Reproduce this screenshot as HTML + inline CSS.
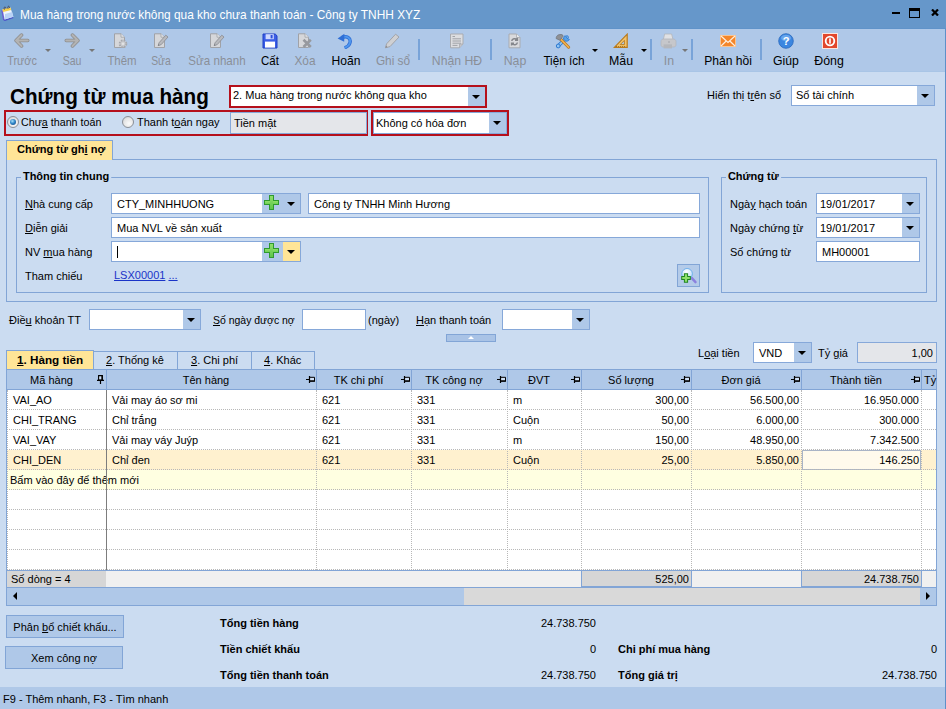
<!DOCTYPE html>
<html><head><meta charset="utf-8">
<style>
*{box-sizing:border-box;margin:0;padding:0}
html,body{width:946px;height:709px;overflow:hidden}
body{background:#cbdcf1;font-family:"Liberation Sans",sans-serif;font-size:12px;color:#000;position:relative}
.a{position:absolute;white-space:nowrap}
#title{left:0;top:0;width:946px;height:28px;background:#6697ca}
#title .t{left:20px;top:8px;color:#fff;font-size:11.9px;transform:scaleX(1.0);transform-origin:0 0}
#tb{left:0;top:28px;width:946px;height:44px;background:#afc8e8}
.tl{font-size:13px;text-align:center;transform:translateX(-50%) scaleX(.86);top:53px;color:#000}
.tl.d{color:#8a8f98}
.sep{width:2px;height:21px;top:39px;background:#78a3d8}
.arr{width:0;height:0;border-left:3px solid transparent;border-right:3px solid transparent;border-top:3px solid #000}
.arr.d{border-top-color:#777}
#status{left:0;top:687px;width:946px;height:22px;background:#afc8e8}
#rb{left:945px;top:28px;width:1px;height:681px;background:#5f90c8;z-index:5}
h1{font-size:22px;font-weight:bold;left:10px;top:84px;transform:scaleX(.94);transform-origin:0 0}
.inp{background:#fff;border:1px solid #86a8d9;height:21px;line-height:21px;padding-left:5px;font-size:12px}
.inp.g{background:#e4e6ea}
.dd{position:absolute;right:0;top:0;width:17px;height:19px;background:#afc8e8}
.dd:after{content:"";position:absolute;left:4px;top:8px;border-left:4px solid transparent;border-right:4px solid transparent;border-top:4px solid #000}
.red{border:2px solid #b5101c}
.lbl{font-size:12px}
u{text-decoration:underline}
.gb{border:1px solid #82a5d6}
.gbt{font-weight:bold;font-size:11.6px;background:#cbdcf1;padding:0 2px;transform:scaleX(.95);transform-origin:0 0}
.b{font-weight:bold}
.rad{width:12px;height:12px;border-radius:50%;border:1px solid #8a8f97;background:radial-gradient(circle at 60% 65%,#fbfbfb 0,#e6e6e6 55%,#c9cacc 100%)}
.rad i{position:absolute;left:2px;top:2px;width:6px;height:6px;border-radius:50%;background:radial-gradient(circle at 40% 35%,#a9e2fb 0,#2f86c8 45%,#123f7c 100%)}
.f{font-size:11px}
.pl{position:absolute;top:0;width:21px;height:19px;background:#afc8e8}
.pl:before{content:"";position:absolute;left:2px;top:1px;width:15px;height:15px;background:
 linear-gradient(#2f9a2f,#2f9a2f) 5px 0/5px 15px no-repeat,linear-gradient(#2f9a2f,#2f9a2f) 0 5px/15px 5px no-repeat}
.pl:after{content:"";position:absolute;left:3px;top:2px;width:13px;height:13px;background:
 linear-gradient(#8fe06a,#5fc54a) 5px 0/3px 13px no-repeat,linear-gradient(#8fe06a,#6fcf55) 0 5px/13px 3px no-repeat}
.btn{background:#afc8e8;border:1px solid #82a5d6;text-align:center;line-height:20px}
</style></head><body>
<div class="a" id="title"><div class="a t">Mua hàng trong nước không qua kho chưa thanh toán - Công ty TNHH XYZ</div></div>
<div class="a" id="tb"></div>
<div class="a" id="rb"></div>
<div class="a" style="left:0;top:28px;width:946px;height:1px;background:#6093c9"></div>
<div class="a" style="left:0;top:71px;width:946px;height:1px;background:#a9c5e6"></div>
<!-- toolbar icons -->
<svg class="a" style="left:13.5px;top:32.5px" width="16" height="15" viewBox="0 0 17 16"><path d="M8 2.2 L2.2 8 L8 13.8 M2.6 8 H14.6" fill="none" stroke="#8c8c8c" stroke-width="3.8" stroke-linejoin="round" stroke-linecap="round"/><path d="M8 2.2 L2.2 8 L8 13.8 M2.6 8 H14.6" fill="none" stroke="#b3b3b3" stroke-width="2.2" stroke-linejoin="round" stroke-linecap="round"/></svg>
<svg class="a" style="left:63.5px;top:32.5px" width="16" height="15" viewBox="0 0 17 16"><path d="M9 2.2 L14.8 8 L9 13.8 M14.4 8 H2.4" fill="none" stroke="#8c8c8c" stroke-width="3.8" stroke-linejoin="round" stroke-linecap="round"/><path d="M9 2.2 L14.8 8 L9 13.8 M14.4 8 H2.4" fill="none" stroke="#b3b3b3" stroke-width="2.2" stroke-linejoin="round" stroke-linecap="round"/></svg>
<svg class="a" style="left:113px;top:33px" width="16" height="16" viewBox="0 0 16 16"><path d="M1.5 0.8 H8 L11.5 4.2 V14.5 H1.5 Z" fill="#d6d7da" stroke="#a0a2a7" stroke-width="1"/><path d="M8 0.8 V4.2 H11.5" fill="#e6e7e9" stroke="#a0a2a7" stroke-width=".8"/><circle cx="10" cy="10.8" r="3.4" fill="#c9cacd" stroke="#a6a8ad" stroke-width="1.8" stroke-dasharray="1.6 1.1"/><circle cx="10" cy="10.8" r="1.3" fill="#e2e3e5"/></svg>
<svg class="a" style="left:153px;top:33px" width="16" height="16" viewBox="0 0 16 16"><path d="M1.5 0.8 H8 L11.5 4.2 V14.5 H1.5 Z" fill="#d6d7da" stroke="#a0a2a7" stroke-width="1"/><path d="M8 0.8 V4.2 H11.5" fill="#e6e7e9" stroke="#a0a2a7" stroke-width=".8"/><path d="M5.2 12.6 L6 9.8 L12.8 2.2 L15 4 L8.2 11.6 Z" fill="#b9babe" stroke="#8f9196" stroke-width=".9"/><path d="M5.2 12.6 L6.4 12.2 L5.7 11.4Z" fill="#55575c"/></svg>
<svg class="a" style="left:209px;top:33px" width="16" height="16" viewBox="0 0 16 16"><path d="M1.5 0.8 H8 L11.5 4.2 V14.5 H1.5 Z" fill="#d6d7da" stroke="#a0a2a7" stroke-width="1"/><path d="M8 0.8 V4.2 H11.5" fill="#e6e7e9" stroke="#a0a2a7" stroke-width=".8"/><path d="M5.2 12.6 L6 9.8 L12.8 2.2 L15 4 L8.2 11.6 Z" fill="#b9babe" stroke="#8f9196" stroke-width=".9"/><path d="M5.2 12.6 L6.4 12.2 L5.7 11.4Z" fill="#55575c"/></svg>
<svg class="a" style="left:262px;top:33px" width="16" height="16" viewBox="0 0 16 16"><path d="M1 1 H13.2 L15 2.8 V15 H1 Z" fill="#3b5ee6" stroke="#1f3fc4" stroke-width="1"/><rect x="3.6" y="1.2" width="8.2" height="5" fill="#cfd9ff"/><rect x="8.6" y="2" width="2" height="3.4" fill="#2b4fd8"/><rect x="3" y="8.6" width="10" height="6" fill="#fff"/></svg>
<svg class="a" style="left:297px;top:33px" width="16" height="16" viewBox="0 0 16 16"><path d="M1.5 0.8 H8 L11.5 4.2 V14.5 H1.5 Z" fill="#d6d7da" stroke="#a0a2a7" stroke-width="1"/><path d="M8 0.8 V4.2 H11.5" fill="#e6e7e9" stroke="#a0a2a7" stroke-width=".8"/><path d="M6.5 6.8 L13.8 14 M13.8 6.8 L6.5 14" stroke="#97999e" stroke-width="2.6"/></svg>
<svg class="a" style="left:337px;top:33px" width="16" height="16" viewBox="0 0 16 16"><path d="M5 4.6 C9.5 2.2 14.2 5 13 9.6 C12.4 12 10.4 13.8 7.6 14.8" fill="none" stroke="#2f6fd6" stroke-width="3.4"/><path d="M5 4.6 C9.5 2.2 14.2 5 13 9.6 C12.4 12 10.4 13.8 7.6 14.8" fill="none" stroke="#4f97ee" stroke-width="1.8"/><path d="M0.6 5.4 L7.4 0.8 L7.2 8.8 Z" fill="#2f6fd6"/></svg>
<svg class="a" style="left:384px;top:33px" width="16" height="16" viewBox="0 0 16 16"><path d="M1.4 14.8 L2.6 10.8 L11.6 1.2 L15 4 L6 13.6 Z" fill="#cfd0d3" stroke="#a2a4a9" stroke-width="1"/><path d="M1.4 14.8 L3.6 14.2 L2.2 12.6 Z" fill="#8a8c91"/></svg>
<svg class="a" style="left:449px;top:33px" width="16" height="16" viewBox="0 0 16 16"><path d="M1.5 1 H14 V11 L10.5 14.8 H1.5 Z" fill="#dcdde0" stroke="#a9abb0"/><path d="M10.5 14.8 V11 H14" fill="#c4c5c9" stroke="#a9abb0" stroke-width=".8"/><path d="M3.5 3.5 H6 M3.5 5.8 H12 M3.5 8 H12 M3.5 10.2 H12 M3.5 12.4 H8.5" stroke="#a0a2a7" stroke-width="1"/></svg>
<svg class="a" style="left:507px;top:33px" width="16" height="16" viewBox="0 0 16 16"><path d="M2 1 H9.5 L13 4.5 V14.8 H2 Z" fill="#d9dadd" stroke="#a9abb0"/><path d="M9.5 1 V4.5 H13" fill="#ebecee" stroke="#a9abb0" stroke-width=".8"/><path d="M4.8 8 C5 5.6 8.5 5 10 6.8 M10.4 4.8 V7.2 H8 M10.4 9.5 C10 12 6.6 12.4 5 10.6 M4.6 12.6 V10.2 H7" fill="none" stroke="#85878c" stroke-width="1.5"/></svg>
<svg class="a" style="left:555px;top:33px" width="16" height="16" viewBox="0 0 16 16"><path d="M3.4 12.8 L12 4.2" stroke="#2f7ad0" stroke-width="3.6" stroke-linecap="round"/><path d="M3.4 12.8 L12 4.2" stroke="#8ec4f4" stroke-width="1.8" stroke-linecap="round"/><path d="M10.2 2.6 A3 3 0 1 0 14.4 6.4 L12.4 5.6 L11.2 4 Z" fill="#5aa2e6" stroke="#2f7ad0" stroke-width=".8"/><circle cx="3.2" cy="13" r="1.9" fill="#8ec4f4" stroke="#2f7ad0" stroke-width="1"/><path d="M6 6.5 L13.6 14.2" stroke="#b9771e" stroke-width="3" stroke-linecap="round"/><path d="M6 6.5 L13.6 14.2" stroke="#f2b252" stroke-width="1.6" stroke-linecap="round"/><path d="M1.2 5.6 C1 2.6 3.6 0.8 7.4 1.8 L8.2 3.2 L4.8 7.2 Z" fill="#8f9196" stroke="#6c6e73" stroke-width=".7"/></svg>
<svg class="a" style="left:613px;top:33px" width="16" height="16" viewBox="0 0 16 16"><path d="M14.2 1.2 V14.4 H1.4 Z" fill="#f3c36a" stroke="#b97a1c" stroke-width="1.2"/><path d="M11.4 7.4 V11.6 H7.2 Z" fill="#afc8e8" stroke="#b97a1c" stroke-width=".9"/><path d="M3.5 13 V14 M5.5 13 V14 M7.5 13 V14 M9.5 13 V14 M11.5 13 V14" stroke="#8a5a12" stroke-width=".7"/></svg>
<svg class="a" style="left:660px;top:33px" width="17" height="17" viewBox="0 0 17 17"><path d="M4.6 1 H11.6 L13 6.4 H3.4 Z" fill="#e0e1e4" stroke="#b4b6bb" stroke-width=".8"/><path d="M1 8.6 C1 6.8 2.2 6 3.8 6 H12.8 C14.8 6 16 6.8 16 8.6 V12 C16 13.4 14.8 14 13.6 14 H3.4 C2.2 14 1 13.4 1 12 Z" fill="#c6c7cb" stroke="#b0b2b7" stroke-width=".6"/><rect x="3.6" y="11.4" width="8.4" height="4" fill="#b5b7bc"/><circle cx="9" cy="9" r=".8" fill="#a0a2a7"/></svg>
<svg class="a" style="left:720px;top:33px" width="16" height="16" viewBox="0 0 16 16"><rect x=".5" y="2.5" width="15" height="11" fill="#f4862a" stroke="#f7c391"/><path d="M1 3 L8 9.4 L15 3 M1 13 L6.2 8 M15 13 L9.8 8" fill="none" stroke="#fdeede" stroke-width="1.2"/></svg>
<svg class="a" style="left:778px;top:33px" width="16" height="16" viewBox="0 0 16 16"><circle cx="8" cy="8" r="7.3" fill="#3b86e0" stroke="#2968bd" stroke-width=".8"/><ellipse cx="8" cy="5" rx="5" ry="3.2" fill="#79b2f2" opacity=".7"/><text x="8" y="12" font-family="Liberation Sans" font-weight="bold" font-size="11" fill="#fff" text-anchor="middle">?</text></svg>
<svg class="a" style="left:822px;top:33px" width="16" height="16" viewBox="0 0 16 16"><rect x=".5" y=".5" width="15" height="15" fill="#e2472c" stroke="#fbe4de"/><circle cx="8" cy="8" r="4.3" fill="none" stroke="#fff" stroke-width="1.8"/><rect x="7.2" y="5.4" width="1.6" height="5.2" fill="#fff"/></svg>
<!-- toolbar labels -->
<div class="a tl d" style="left:21.8px;transform:translateX(-50%) scaleX(0.835)">Trước</div>
<div class="a tl d" style="left:72.3px;transform:translateX(-50%) scaleX(0.81)">Sau</div>
<div class="a tl d" style="left:122px;transform:translateX(-50%) scaleX(0.88)">Thêm</div>
<div class="a tl d" style="left:161.3px;transform:translateX(-50%) scaleX(0.8)">Sửa</div>
<div class="a tl d" style="left:217px;transform:translateX(-50%) scaleX(0.89)">Sửa nhanh</div>
<div class="a tl" style="left:269.7px;transform:translateX(-50%) scaleX(0.88)">Cất</div>
<div class="a tl d" style="left:304.9px;transform:translateX(-50%) scaleX(0.91)">Xóa</div>
<div class="a tl" style="left:345.8px;transform:translateX(-50%) scaleX(0.93)">Hoãn</div>
<div class="a tl d" style="left:392.9px;transform:translateX(-50%) scaleX(0.91)">Ghi sổ</div>
<div class="a tl d" style="left:456.6px;transform:translateX(-50%) scaleX(0.94)">Nhận HĐ</div>
<div class="a tl d" style="left:515px;transform:translateX(-50%) scaleX(0.95)">Nạp</div>
<div class="a tl" style="left:563.5px;transform:translateX(-50%) scaleX(0.9)">Tiện ích</div>
<div class="a tl" style="left:621px;transform:translateX(-50%) scaleX(0.95)">Mẫu</div>
<div class="a tl d" style="left:668.6px;transform:translateX(-50%) scaleX(0.95)">In</div>
<div class="a tl" style="left:728.3px;transform:translateX(-50%) scaleX(0.93)">Phản hồi</div>
<div class="a tl" style="left:786.3px;transform:translateX(-50%) scaleX(0.94)">Giúp</div>
<div class="a tl" style="left:829.4px;transform:translateX(-50%) scaleX(0.95)">Đóng</div>
<div class="a sep" style="left:418px"></div>
<div class="a sep" style="left:490px"></div>
<div class="a sep" style="left:650px"></div>
<div class="a sep" style="left:691px"></div>
<div class="a sep" style="left:760px"></div>
<div class="a arr d" style="left:45px;top:49px"></div>
<div class="a arr d" style="left:89px;top:49px"></div>
<div class="a arr" style="left:592px;top:49px"></div>
<div class="a arr" style="left:641px;top:49px"></div>
<div class="a arr d" style="left:682px;top:49px"></div>
<!-- window controls -->
<div class="a" style="left:892px;top:12px;width:8px;height:2px;background:#000"></div>
<div class="a" style="left:909px;top:8px;width:11px;height:10px;border:1px solid #000;border-top-width:3px"></div>
<svg class="a" style="left:931px;top:9px" width="8" height="7" viewBox="0 0 8 7"><path d="M1 0.5 L7 6.5 M7 0.5 L1 6.5" stroke="#000" stroke-width="2.2"/></svg>
<!-- app icon -->
<svg class="a" style="left:0px;top:5px" width="15" height="17" viewBox="0 0 15 17"><path d="M1.2 5.2 L3 14.8 L5 16 L4 5 Z" fill="#6a5fd0"/><path d="M3 14.8 L5 16 L13.6 13 L12.4 11.6 Z" fill="#4a55c8"/><path d="M2.6 4.4 L10.4 2.6 L13.4 11.8 L4.6 14.6 Z" fill="#eef4ff"/><path d="M5 9 L12.2 7 L13.4 11.8 L4.6 14.6 Z" fill="#b9d2f6"/><path d="M2.4 4.2 L10.4 2.4 L11.2 5 L3 7 Z" fill="#f6cf4a"/><path d="M4.4 4.6 C3.4 1.6 5.6 1 6 3.6 M8 3.8 C7.2 0.8 9.4 0.4 9.6 3" fill="none" stroke="#4a4a5a" stroke-width="1"/></svg>
<!--TOOLBAR_END-->

<h1 class="a" id="h1">Chứng từ mua hàng</h1>
<div class="a inp red" style="left:229px;top:85px;width:258px;height:23px;line-height:17px;padding-left:2px;font-size:11px"><span id="c1">2. Mua hàng trong nước không qua kho</span><div class="dd" style="width:17px;height:19px"></div></div>
<div class="a lbl" style="left:707px;top:89px;font-size:11px" id="l_hts">Hiển thị t<u>r</u>ên sổ</div>
<div class="a inp" style="left:791px;top:85px;width:144px;height:21px;line-height:19px;font-size:11px;padding-left:4px">Sổ tài chính<div class="dd" style="height:19px;width:17px"></div></div>
<div class="a red" style="left:4px;top:110px;width:364px;height:26px"></div>
<div class="a red" style="left:371px;top:110px;width:138px;height:26px"></div>
<div class="a rad" style="left:7px;top:116px"><i></i></div>
<div class="a lbl" style="left:21px;top:116px;font-size:11px;transform:scaleX(.973);transform-origin:0 0" id="r1">Chư<u>a</u> thanh toán</div>
<div class="a rad" style="left:122px;top:116px"></div>
<div class="a lbl" style="left:137px;top:116px;font-size:11px" id="r2">Thanh t<u>o</u>án ngay</div>
<div class="a inp g" style="left:230px;top:112px;width:137px;height:22px;line-height:20px;font-size:11px;padding-left:3px">Tiền mặt</div>
<div class="a inp" style="left:373px;top:112px;width:134px;height:22px;line-height:20px;font-size:11px;padding-left:2px">Không có hóa đơn<div class="dd" style="top:0;right:0;height:20px;width:17px"></div></div>
<!--HEADER_END-->

<div class="a" style="left:6px;top:159px;width:931px;height:143px;border:1px solid #82a5d6"></div>
<div class="a" style="left:6px;top:140px;width:107px;height:20px;background:#ffe597;border:1px solid #82a5d6;border-bottom:0"></div>
<div class="a b" style="left:17px;top:143px;font-size:11.5px;transform:scaleX(.96);transform-origin:0 0" id="tab0">Chứng từ gh<u>i</u> nợ</div>
<div class="a gb" style="left:16px;top:177px;width:693px;height:116px"></div>
<div class="a gbt" style="left:21px;top:169px" id="gb1">Thông tin chung</div>
<div class="a gb" style="left:721px;top:177px;width:206px;height:116px"></div>
<div class="a gbt" style="left:726px;top:169px" id="gb2">Chứng từ</div>

<div class="a f" style="left:25px;top:198px"><u>N</u>hà cung cấp</div>
<div class="a inp f" style="left:111px;top:193px;width:190px">CTY_MINHHUONG<div class="pl" style="right:17px"></div><div class="dd"></div></div>
<div class="a inp f" style="left:308px;top:193px;width:392px">Công ty TNHH Minh Hương</div>
<div class="a f" style="left:25px;top:222px"><u>D</u>iễn giải</div>
<div class="a inp f" style="left:111px;top:217px;width:589px">Mua NVL về sản xuất</div>
<div class="a f" style="left:25px;top:246px">NV <u>m</u>ua hàng</div>
<div class="a inp f" style="left:111px;top:241px;width:190px"><span style="position:absolute;left:5px;top:4px;width:1px;height:12px;background:#000"></span><div class="pl" style="right:17px"></div><div class="dd" style="background:#ffe597"></div></div>
<div class="a f" style="left:25px;top:270px">Tham chiếu</div>
<div class="a f" style="left:114px;top:269px;color:#1a34c8"><u>LSX00001</u> <u>...</u></div>
<div class="a" style="left:677px;top:264px;width:23px;height:23px;background:#b4cbe9;border:1px solid #82a5d6"></div>
<svg class="a" style="left:680px;top:267px" width="17" height="17" viewBox="0 0 17 17"><defs><radialGradient id="mg" cx=".45" cy=".3" r=".7"><stop offset="0" stop-color="#ffffff"/><stop offset=".7" stop-color="#cfe6fb"/><stop offset="1" stop-color="#9ccbf5"/></radialGradient></defs><path d="M11.6 10.8 L15.4 15" stroke="#8b80de" stroke-width="2.6" stroke-linecap="round"/><circle cx="7.1" cy="6.8" r="5.3" fill="url(#mg)" stroke="#6fb0ec" stroke-width="1"/><path d="M6 6.2 V15.8 M1.2 11 H10.8" stroke="#1f861f" stroke-width="4.2"/><path d="M6 7.2 V14.8 M2.2 11 H9.8" stroke="#8ee06a" stroke-width="2.2"/></svg>

<div class="a f" style="left:730px;top:198px">Ngà<u>y</u> hạch toán</div>
<div class="a inp f" style="left:816px;top:193px;width:104px;padding-left:3px">19/01/2017<div class="dd"></div></div>
<div class="a f" style="left:730px;top:222px">Ngày chứng <u>t</u>ừ</div>
<div class="a inp f" style="left:816px;top:217px;width:104px;padding-left:3px">19/01/2017<div class="dd"></div></div>
<div class="a f" style="left:730px;top:246px">Số chứn<u>g</u> từ</div>
<div class="a inp f" style="left:816px;top:241px;width:104px">MH00001</div>

<div class="a f" style="left:9px;top:314px">Điề<u>u</u> khoản TT</div>
<div class="a inp f" style="left:89px;top:309px;width:112px"><div class="dd"></div></div>
<div class="a f" style="left:213px;top:314px;transform:scaleX(.95);transform-origin:0 0"><u>S</u>ố ngày được nợ</div>
<div class="a inp f" style="left:302px;top:309px;width:64px"></div>
<div class="a f" style="left:368px;top:314px">(ngày)</div>
<div class="a f" style="left:416px;top:314px"><u>H</u>ạn thanh toán</div>
<div class="a inp f" style="left:502px;top:309px;width:88px"><div class="dd"></div></div>
<div class="a" style="left:446px;top:334px;width:50px;height:8px;background:#a9c3e6;border:1px solid #82a5d6"></div>
<div class="a" style="left:468px;top:336px;width:0;height:0;border-left:3px solid transparent;border-right:3px solid transparent;border-bottom:3px solid #fff"></div>
<!--FORM_END-->
<div class="a" style="left:6px;top:350px;width:88px;height:21px;background:#ffe597;border:1px solid #82a5d6;border-bottom:0"></div>
<div class="a b" style="left:17px;top:353px;font-size:11.7px" id="t1"><u>1</u>. Hàng tiền</div>
<div class="a" style="left:93px;top:351px;width:85px;height:20px;border:1px solid #82a5d6;border-bottom:0;background:#cbdcf1"></div>
<div class="a f" style="left:106px;top:354px"><u>2</u>. Thống kê</div>
<div class="a" style="left:177px;top:351px;width:75px;height:20px;border:1px solid #82a5d6;border-bottom:0;background:#cbdcf1"></div>
<div class="a f" style="left:191px;top:354px"><u>3</u>. Chi phí</div>
<div class="a" style="left:251px;top:351px;width:64px;height:20px;border:1px solid #82a5d6;border-bottom:0;background:#cbdcf1"></div>
<div class="a f" style="left:264px;top:354px"><u>4</u>. Khác</div>
<div class="a f" style="left:698px;top:347px">L<u>o</u>ại tiền</div>
<div class="a inp f" style="left:753px;top:342px;width:59px;padding-left:5px">VND<div class="dd"></div></div>
<div class="a f" style="left:818px;top:347px">Tỷ <u>g</u>iá</div>
<div class="a inp g f" style="left:857px;top:342px;width:80px;text-align:right;padding-right:3px">1,00</div>
<div class="a" style="left:6px;top:369px;width:931px;height:237px;background:#fff;border:1px solid #82a5d6"></div>
<div class="a" style="left:7px;top:370px;width:929px;height:20px;background:#afc8e8;border-bottom:1px solid #82a5d6"></div>
<div class="a f" style="left:51.5px;top:374px;transform:translateX(-50%)">Mã hàng</div>
<div class="a" style="left:106px;top:370px;width:1px;height:20px;background:#82a5d6"></div>
<div class="a f" style="left:206.0px;top:374px;transform:translateX(-50%)">Tên hàng</div>
<div class="a" style="left:316px;top:370px;width:1px;height:20px;background:#82a5d6"></div>
<div class="a f" style="left:358.5px;top:374px;transform:translateX(-50%)">TK chi phí</div>
<div class="a" style="left:411px;top:370px;width:1px;height:20px;background:#82a5d6"></div>
<div class="a f" style="left:454.0px;top:374px;transform:translateX(-50%)">TK công nợ</div>
<div class="a" style="left:507px;top:370px;width:1px;height:20px;background:#82a5d6"></div>
<div class="a f" style="left:539.0px;top:374px;transform:translateX(-50%)">ĐVT</div>
<div class="a" style="left:581px;top:370px;width:1px;height:20px;background:#82a5d6"></div>
<div class="a f" style="left:631.0px;top:374px;transform:translateX(-50%)">Số lượng</div>
<div class="a" style="left:691px;top:370px;width:1px;height:20px;background:#82a5d6"></div>
<div class="a f" style="left:741.0px;top:374px;transform:translateX(-50%)">Đơn giá</div>
<div class="a" style="left:801px;top:370px;width:1px;height:20px;background:#82a5d6"></div>
<div class="a f" style="left:856.0px;top:374px;transform:translateX(-50%)">Thành tiền</div>
<div class="a" style="left:921px;top:370px;width:1px;height:20px;background:#82a5d6"></div>
<div class="a f" style="left:924px;top:374px">Tỷ</div>
<svg class="a" style="left:97px;top:375px" width="7" height="9" viewBox="0 0 7 9"><path d="M1.6 0.6 H5.4 V5 H1.6 Z" fill="#cfe0f6" stroke="#000" stroke-width="1.1"/><path d="M5 0.6 V5 M0 5.4 H7 M3.5 5.4 V9" fill="none" stroke="#000" stroke-width="1.2"/></svg>
<svg class="a" style="left:306px;top:376px" width="9" height="7" viewBox="0 0 9 7"><path d="M3.5 1.3 H8.5 V5 H3.5 Z" fill="#cfe0f6" stroke="#000" stroke-width="1"/><path d="M3.5 0 V7 M0 3.5 H3.5 M3.5 5.2 H9" fill="none" stroke="#000" stroke-width="1.2"/></svg>
<svg class="a" style="left:401px;top:376px" width="9" height="7" viewBox="0 0 9 7"><path d="M3.5 1.3 H8.5 V5 H3.5 Z" fill="#cfe0f6" stroke="#000" stroke-width="1"/><path d="M3.5 0 V7 M0 3.5 H3.5 M3.5 5.2 H9" fill="none" stroke="#000" stroke-width="1.2"/></svg>
<svg class="a" style="left:497px;top:376px" width="9" height="7" viewBox="0 0 9 7"><path d="M3.5 1.3 H8.5 V5 H3.5 Z" fill="#cfe0f6" stroke="#000" stroke-width="1"/><path d="M3.5 0 V7 M0 3.5 H3.5 M3.5 5.2 H9" fill="none" stroke="#000" stroke-width="1.2"/></svg>
<svg class="a" style="left:571px;top:376px" width="9" height="7" viewBox="0 0 9 7"><path d="M3.5 1.3 H8.5 V5 H3.5 Z" fill="#cfe0f6" stroke="#000" stroke-width="1"/><path d="M3.5 0 V7 M0 3.5 H3.5 M3.5 5.2 H9" fill="none" stroke="#000" stroke-width="1.2"/></svg>
<svg class="a" style="left:681px;top:376px" width="9" height="7" viewBox="0 0 9 7"><path d="M3.5 1.3 H8.5 V5 H3.5 Z" fill="#cfe0f6" stroke="#000" stroke-width="1"/><path d="M3.5 0 V7 M0 3.5 H3.5 M3.5 5.2 H9" fill="none" stroke="#000" stroke-width="1.2"/></svg>
<svg class="a" style="left:791px;top:376px" width="9" height="7" viewBox="0 0 9 7"><path d="M3.5 1.3 H8.5 V5 H3.5 Z" fill="#cfe0f6" stroke="#000" stroke-width="1"/><path d="M3.5 0 V7 M0 3.5 H3.5 M3.5 5.2 H9" fill="none" stroke="#000" stroke-width="1.2"/></svg>
<svg class="a" style="left:911px;top:376px" width="9" height="7" viewBox="0 0 9 7"><path d="M3.5 1.3 H8.5 V5 H3.5 Z" fill="#cfe0f6" stroke="#000" stroke-width="1"/><path d="M3.5 0 V7 M0 3.5 H3.5 M3.5 5.2 H9" fill="none" stroke="#000" stroke-width="1.2"/></svg>
<div class="a f" style="left:13px;top:394px">VAI_AO</div>
<div class="a f" style="left:112px;top:394px">Vải may áo sơ mi</div>
<div class="a f" style="left:322px;top:394px">621</div>
<div class="a f" style="left:417px;top:394px">331</div>
<div class="a f" style="left:513px;top:394px">m</div>
<div class="a f" style="left:581px;width:108px;text-align:right;top:394px">300,00</div>
<div class="a f" style="left:691px;width:108px;text-align:right;top:394px">56.500,00</div>
<div class="a f" style="left:801px;width:118px;text-align:right;top:394px">16.950.000</div>
<div class="a f" style="left:13px;top:414px">CHI_TRANG</div>
<div class="a f" style="left:112px;top:414px">Chỉ trắng</div>
<div class="a f" style="left:322px;top:414px">621</div>
<div class="a f" style="left:417px;top:414px">331</div>
<div class="a f" style="left:513px;top:414px">Cuộn</div>
<div class="a f" style="left:581px;width:108px;text-align:right;top:414px">50,00</div>
<div class="a f" style="left:691px;width:108px;text-align:right;top:414px">6.000,00</div>
<div class="a f" style="left:801px;width:118px;text-align:right;top:414px">300.000</div>
<div class="a f" style="left:13px;top:434px">VAI_VAY</div>
<div class="a f" style="left:112px;top:434px">Vải may váy Juýp</div>
<div class="a f" style="left:322px;top:434px">621</div>
<div class="a f" style="left:417px;top:434px">331</div>
<div class="a f" style="left:513px;top:434px">m</div>
<div class="a f" style="left:581px;width:108px;text-align:right;top:434px">150,00</div>
<div class="a f" style="left:691px;width:108px;text-align:right;top:434px">48.950,00</div>
<div class="a f" style="left:801px;width:118px;text-align:right;top:434px">7.342.500</div>
<div class="a" style="left:7px;top:450px;width:929px;height:20px;background:#fff1cf"></div>
<div class="a" style="left:802px;top:450px;width:119px;height:20px;background:#fffaec;border:1px solid #a9b4c6"></div>
<div class="a f" style="left:13px;top:454px">CHI_DEN</div>
<div class="a f" style="left:112px;top:454px">Chỉ đen</div>
<div class="a f" style="left:322px;top:454px">621</div>
<div class="a f" style="left:417px;top:454px">331</div>
<div class="a f" style="left:513px;top:454px">Cuộn</div>
<div class="a f" style="left:581px;width:108px;text-align:right;top:454px">25,00</div>
<div class="a f" style="left:691px;width:108px;text-align:right;top:454px">5.850,00</div>
<div class="a f" style="left:801px;width:118px;text-align:right;top:454px">146.250</div>
<div class="a" style="left:7px;top:470px;width:929px;height:20px;background:#ffffe1"></div>
<div class="a f" style="left:10px;top:474px">Bấm vào đây để thêm mới</div>
<div class="a" style="left:7px;top:409px;width:929px;height:0;border-top:1px dotted #b8b8b8"></div>
<div class="a" style="left:7px;top:429px;width:929px;height:0;border-top:1px dotted #b8b8b8"></div>
<div class="a" style="left:7px;top:449px;width:929px;height:0;border-top:1px dotted #b8b8b8"></div>
<div class="a" style="left:7px;top:469px;width:929px;height:0;border-top:1px dotted #b8b8b8"></div>
<div class="a" style="left:7px;top:489px;width:929px;height:0;border-top:1px dotted #b8b8b8"></div>
<div class="a" style="left:7px;top:509px;width:929px;height:0;border-top:1px dotted #b8b8b8"></div>
<div class="a" style="left:7px;top:529px;width:929px;height:0;border-top:1px dotted #b8b8b8"></div>
<div class="a" style="left:7px;top:549px;width:929px;height:0;border-top:1px dotted #b8b8b8"></div>
<div class="a" style="left:7px;top:569px;width:929px;height:0;border-top:1px dotted #b8b8b8"></div>
<div class="a" style="left:7px;top:589px;width:929px;height:0;border-top:1px dotted #b8b8b8"></div>
<div class="a" style="left:316px;top:390px;width:0;height:180px;border-left:1px dotted #b8b8b8"></div>
<div class="a" style="left:411px;top:390px;width:0;height:180px;border-left:1px dotted #b8b8b8"></div>
<div class="a" style="left:507px;top:390px;width:0;height:180px;border-left:1px dotted #b8b8b8"></div>
<div class="a" style="left:581px;top:390px;width:0;height:180px;border-left:1px dotted #b8b8b8"></div>
<div class="a" style="left:691px;top:390px;width:0;height:180px;border-left:1px dotted #b8b8b8"></div>
<div class="a" style="left:801px;top:390px;width:0;height:180px;border-left:1px dotted #b8b8b8"></div>
<div class="a" style="left:921px;top:390px;width:0;height:180px;border-left:1px dotted #b8b8b8"></div>
<div class="a" style="left:106px;top:390px;width:1px;height:197px;background:#7d7d7d"></div>
<div class="a" style="left:7px;top:570px;width:929px;height:18px;background:#f0f0f0;border-top:1px solid #82a5d6"></div>
<div class="a" style="left:7px;top:571px;width:99px;height:17px;background:#d6d6d6"></div>
<div class="a f" style="left:11px;top:573px">Số dòng = 4</div>
<div class="a" style="left:581px;top:570px;width:111px;height:17px;background:#d6d6d6;border:1px solid #82a5d6"></div>
<div class="a f" style="left:581px;width:108px;text-align:right;top:573px">525,00</div>
<div class="a" style="left:801px;top:570px;width:121px;height:17px;background:#d6d6d6;border:1px solid #82a5d6"></div>
<div class="a f" style="left:801px;width:118px;text-align:right;top:573px">24.738.750</div>
<div class="a" style="left:7px;top:587px;width:929px;height:18px;background:#afc8e8;border-top:1px solid #82a5d6"></div>
<div class="a" style="left:464px;top:588px;width:456px;height:17px;background:#d9d9d9"></div>
<div class="a" style="left:13px;top:592px;width:0;height:0;border-top:4px solid transparent;border-bottom:4px solid transparent;border-right:4px solid #000"></div>
<div class="a" style="left:926px;top:592px;width:0;height:0;border-top:4px solid transparent;border-bottom:4px solid transparent;border-left:4px solid #000"></div>
<div class="a" style="left:7px;top:390px;width:0;height:180px;border-left:1px dotted #b8b8b8"></div>
<!--GRID_END-->

<div class="a btn f" style="left:6px;top:615px;width:118px;height:23px;line-height:22px">Phân <u>b</u>ổ chiết khấu...</div>
<div class="a btn f" style="left:5px;top:646px;width:118px;height:23px;line-height:22px">Xem công nợ</div>
<div class="a b f" style="left:220px;top:617px" id="b1">Tổng tiền hàng</div>
<div class="a b f" style="left:220px;top:643px" id="b2">Tiền chiết khấu</div>
<div class="a b f" style="left:220px;top:669px" id="b3">Tổng tiền thanh toán</div>
<div class="a f" style="left:496px;width:100px;text-align:right;top:617px">24.738.750</div>
<div class="a f" style="left:496px;width:100px;text-align:right;top:643px">0</div>
<div class="a f" style="left:496px;width:100px;text-align:right;top:669px">24.738.750</div>
<div class="a b f" style="left:618px;top:643px" id="b4">Chi phí mua hàng</div>
<div class="a b f" style="left:618px;top:669px" id="b5">Tổng giá trị</div>
<div class="a f" style="left:837px;width:100px;text-align:right;top:643px">0</div>
<div class="a f" style="left:837px;width:100px;text-align:right;top:669px">24.738.750</div>
<div class="a" style="left:942px;top:699px;width:2px;height:2px;background:#2f4775;box-shadow:1px 1px 0 #d4e2f5"></div><div class="a" style="left:938px;top:703px;width:2px;height:2px;background:#2f4775;box-shadow:1px 1px 0 #d4e2f5"></div><div class="a" style="left:942px;top:703px;width:2px;height:2px;background:#2f4775;box-shadow:1px 1px 0 #d4e2f5"></div><div class="a" style="left:934px;top:707px;width:2px;height:2px;background:#2f4775;box-shadow:1px 1px 0 #d4e2f5"></div><div class="a" style="left:938px;top:707px;width:2px;height:2px;background:#2f4775;box-shadow:1px 1px 0 #d4e2f5"></div><div class="a" style="left:942px;top:707px;width:2px;height:2px;background:#2f4775;box-shadow:1px 1px 0 #d4e2f5"></div>
<!--BOTTOM_END-->
<div class="a" id="status"></div>
<div class="a" style="left:3px;top:693px;font-size:11px">F9 - Thêm nhanh, F3 - Tìm nhanh</div>
</body></html>
